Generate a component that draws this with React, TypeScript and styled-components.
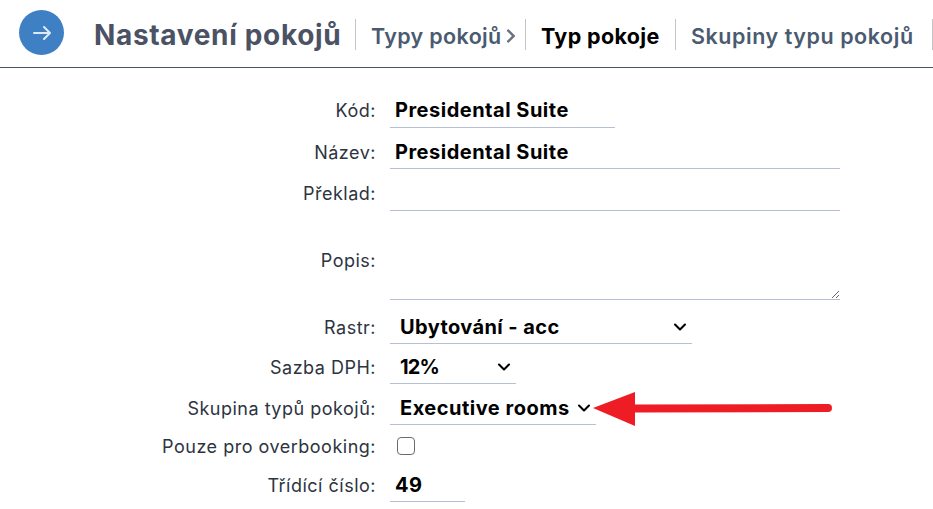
import React from 'react';
import { createGlobalStyle, styled } from 'styled-components';
import { FaChevronRight } from 'react-icons/fa';
import { LuChevronDown } from 'react-icons/lu';

const GlobalStyle = createGlobalStyle`
  html, body {
    margin: 0;
    padding: 0;
    background: #fff;
    font-family: Inter, "Noto Sans", sans-serif;
    overflow: hidden;
  }
`;

const Page = styled.div`
  position: relative;
  width: 933px;
  height: 509px;
  overflow: hidden;
`;

const Header = styled.header`
  display: flex;
  align-items: center;
  height: 67px;
  padding-left: 19px;
  border-bottom: 1px solid #4a5264;
  box-sizing: content-box;
  white-space: nowrap;
`;

const RoundButton = styled.button`
  display: flex;
  align-items: center;
  justify-content: center;
  flex: none;
  width: 45px;
  height: 45px;
  margin-right: 30px;
  margin-top: -2px;
  padding: 0;
  border: 0;
  border-radius: 50%;
  background: #3f7fc4;
  color: #dfe9f5;
`;

const Title = styled.h1`
  flex: none;
  width: 261px;
  margin: 2px 0 0;
  font-size: 28px;
  font-weight: 700;
  line-height: 32px;
  letter-spacing: 0.67px;
  color: #4a5264;
`;

const Tab = styled.div<{ $active?: boolean; $width: number; $spacing?: number }>`
  display: flex;
  align-items: center;
  flex: none;
  box-sizing: border-box;
  width: ${(p) => p.$width}px;
  height: 31px;
  margin-top: 2px;
  padding: 3px 0 0 15px;
  border-left: 1px solid #c4c4c4;
  font-size: 21.5px;
  font-weight: ${(p) => (p.$active ? 700 : 600)};
  letter-spacing: ${(p) => p.$spacing ?? 0.35}px;
  color: ${(p) => (p.$active ? '#000' : '#4a5a70')};
`;

const Form = styled.form`
  display: flex;
  flex-direction: column;
  padding-top: 25px;
`;

const Row = styled.div<{ $height: number; $gap?: number }>`
  display: flex;
  align-items: center;
  height: ${(p) => p.$height}px;
  margin-bottom: ${(p) => p.$gap ?? 6}px;
`;

const Label = styled.label`
  flex: none;
  width: 376px;
  margin-right: 14px;
  text-align: right;
  font-size: 18px;
  letter-spacing: 0.5px;
  color: #2d3440;
`;

const TextInput = styled.input<{ $width: number }>`
  box-sizing: border-box;
  width: ${(p) => p.$width}px;
  height: 100%;
  padding: 0 0 0 5px;
  border: 0;
  border-bottom: 1px solid #b5bfd6;
  outline: none;
  font-family: inherit;
  font-size: 20px;
  font-weight: 700;
  letter-spacing: 0.5px;
  color: #000;
`;

const TextArea = styled.textarea`
  box-sizing: border-box;
  width: 450px;
  height: 100%;
  padding: 5px;
  border: 0;
  border-bottom: 1px solid #b5bfd6;
  outline: none;
`;

const SelectBox = styled.div<{ $width: number; $spacing?: number }>`
  position: relative;
  display: flex;
  align-items: center;
  box-sizing: border-box;
  width: ${(p) => p.$width}px;
  height: 100%;
  padding-left: 10px;
  border-bottom: 1px solid #b5bfd6;
  font-size: 20px;
  font-weight: 700;
  letter-spacing: ${(p) => p.$spacing ?? 0.4}px;
  color: #000;

  svg {
    position: absolute;
    right: 2px;
    top: 7px;
  }
`;

const Check = styled.input`
  box-sizing: border-box;
  width: 18px;
  height: 18px;
  margin: 0 0 0 7px;
  appearance: none;
  border: 1.5px solid #6b6b6b;
  border-radius: 4px;
  background: #fff;
`;

const ArrowMark = styled.svg`
  position: absolute;
  left: 590px;
  top: 384px;
`;

const TabChevron = styled(FaChevronRight)`
  margin-left: 1px;
  color: #6b7280;
`;

export default function App() {
  return (
    <Page>
      <GlobalStyle />
      <Header>
        <RoundButton type="button">
          <svg width="18" height="14" viewBox="0 0 18 14" fill="none" stroke="currentColor" strokeWidth="2" strokeLinecap="round" strokeLinejoin="round">
            <path d="M1 7H17M11 1l6 6-6 6" />
          </svg>
        </RoundButton>
        <Title>Nastavení pokojů</Title>
        <Tab $width={170}>
          Typy pokojů
          <TabChevron size={16} />
        </Tab>
        <Tab $active $width={150}>Typ pokoje</Tab>
        <Tab $width={257} $spacing={0.55}>Skupiny typu pokojů</Tab>
        <Tab $width={1} />
      </Header>
      <Form>
        <Row $height={35} $gap={7}>
          <Label>Kód:</Label>
          <TextInput $width={225} readOnly value="Presidental Suite" />
        </Row>
        <Row $height={34}>
          <Label>Název:</Label>
          <TextInput $width={450} readOnly value="Presidental Suite" />
        </Row>
        <Row $height={36} $gap={9}>
          <Label>Překlad:</Label>
          <TextInput $width={450} readOnly value="" />
        </Row>
        <Row $height={80} $gap={10}>
          <Label>Popis:</Label>
          <TextArea />
        </Row>
        <Row $height={34}>
          <Label>Rastr:</Label>
          <SelectBox $width={302}>
            Ubytování - acc
            <LuChevronDown size={20} strokeWidth={2.5} />
          </SelectBox>
        </Row>
        <Row $height={34} $gap={7}>
          <Label>Sazba DPH:</Label>
          <SelectBox $width={126} $spacing={-0.8}>
            12%
            <LuChevronDown size={20} strokeWidth={2.5} />
          </SelectBox>
        </Row>
        <Row $height={34} $gap={12}>
          <Label>Skupina typů pokojů:</Label>
          <SelectBox $width={206} $spacing={0.5}>
            Executive rooms
            <LuChevronDown size={20} strokeWidth={2.5} />
          </SelectBox>
        </Row>
        <Row $height={18} $gap={13}>
          <Label>Pouze pro overbooking:</Label>
          <Check type="checkbox" />
        </Row>
        <Row $height={34}>
          <Label>Třídící číslo:</Label>
          <TextInput $width={75} readOnly value="49" />
        </Row>
      </Form>
      <ArrowMark width="250" height="44" viewBox="0 0 250 44">
        <polygon points="3,24 45,8 45,42" fill="#ee1c25" />
        <line x1="44" y1="24.5" x2="238" y2="24" stroke="#ee1c25" strokeWidth="8" strokeLinecap="round" />
      </ArrowMark>
    </Page>
  );
}
